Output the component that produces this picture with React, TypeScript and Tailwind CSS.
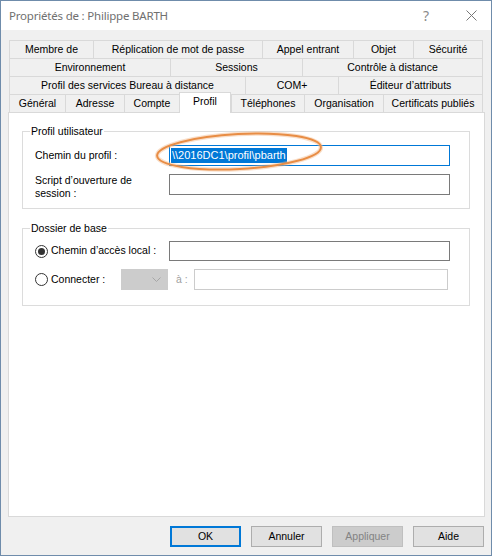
import React from "react";

type Tab = { label: string; w: number; active?: boolean };

const tabRows: Tab[][] = [
  [
    { label: "Membre de", w: 84 },
    { label: "Réplication de mot de passe", w: 169 },
    { label: "Appel entrant", w: 91 },
    { label: "Objet", w: 60 },
    { label: "Sécurité", w: 69 },
  ],
  [
    { label: "Environnement", w: 161 },
    { label: "Sessions", w: 132 },
    { label: "Contrôle à distance", w: 180 },
  ],
  [
    { label: "Profil des services Bureau à distance", w: 236 },
    { label: "COM+", w: 93 },
    { label: "Éditeur d’attributs", w: 144 },
  ],
  [
    { label: "Général", w: 56 },
    { label: "Adresse", w: 59 },
    { label: "Compte", w: 55 },
    { label: "Profil", w: 52, active: true },
    { label: "Téléphones", w: 73 },
    { label: "Organisation", w: 79 },
    { label: "Certificats publiés", w: 99 },
  ],
];

function Radio({ checked }: { checked?: boolean }) {
  return (
    <span className="flex h-[13px] w-[13px] shrink-0 items-center justify-center rounded-full border border-[#333333] bg-white">
      {checked && <span className="h-[7px] w-[7px] rounded-full bg-[#333333]" />}
    </span>
  );
}

function Button({
  label,
  primary,
  disabled,
}: {
  label: string;
  primary?: boolean;
  disabled?: boolean;
}) {
  const cls = primary
    ? "border-2 border-[#0078d7] bg-[#e1e1e1] text-black"
    : disabled
    ? "border border-[#bfbfbf] bg-[#cccccc] text-[#838383]"
    : "border border-[#adadad] bg-[#e1e1e1] text-black";
  return (
    <div className={`flex h-[21px] w-[71px] items-center justify-center ${cls}`}>
      {label}
    </div>
  );
}

export default function App() {
  return (
    <div
      className="flex h-[556px] w-[492px] flex-col border border-[#6f8cab] bg-[#f0f0f0] text-[10.5px] text-black"
      style={{ fontFamily: '"Liberation Sans", Arial, sans-serif' }}
    >
      {/* title bar */}
      <div className="flex h-[29px] shrink-0 items-center bg-white pl-[8px] pr-[14px]">
        <span
          className="text-[11.5px] tracking-[-0.2px] text-[#707070]"
          style={{ fontFamily: '"Noto Sans", sans-serif' }}
        >
          Propriétés de : Philippe BARTH
        </span>
        <span
          className="ml-auto mr-[37px] text-[14px] text-[#8a8a8a]"
          style={{ fontFamily: '"Noto Sans", sans-serif' }}
        >
          ?
        </span>
        <svg width="11" height="11" viewBox="0 0 11 11" className="text-[#777777]">
          <path d="M0.5 0.5 L10.5 10.5 M10.5 0.5 L0.5 10.5" stroke="currentColor" strokeWidth="1" />
        </svg>
      </div>

      <div className="flex flex-1 flex-col px-[7px] pt-[10px]">
        {/* tab strip */}
        <div className="mx-[1px] flex flex-col">
          {tabRows.map((row, i) => (
            <div key={i} className="flex h-[18px] border-r border-[#d9d9d9]">
              {row.map((t) =>
                t.active ? (
                  <div
                    key={t.label}
                    style={{ width: t.w }}
                    className="relative z-10 -mt-[2px] flex h-[21px] shrink-0 items-start justify-center border-l border-r border-t border-[#d9d9d9] bg-white pt-[1px]"
                  >
                    {t.label}
                  </div>
                ) : (
                  <div
                    key={t.label}
                    style={{ width: t.w }}
                    className="flex shrink-0 items-center justify-center border-l border-t border-[#d9d9d9]"
                  >
                    {t.label}
                  </div>
                )
              )}
            </div>
          ))}
        </div>

        {/* page */}
        <div className="relative h-[405px] w-[477px] border border-[#d9d9d9] bg-white px-[13px] pt-[12px]">
          <fieldset className="w-[448px] border border-[#dcdcdc] px-[12px] pb-[8px] pt-[7px]">
            <legend className="-ml-[5px] px-[1px] leading-[13px]">Profil utilisateur</legend>
            <div className="flex items-center">
              <span className="w-[134px]">Chemin du profil :</span>
              <div className="flex h-[21px] w-[281px] items-center border border-[#0078d7] bg-white px-[1px]">
                <span className="bg-[#0078d7] px-[1px] text-[11px] leading-[15px] text-white">
                  \\2016DC1\profil\pbarth
                </span>
              </div>
            </div>
            <div className="mt-[8px] flex items-start">
              <span className="w-[134px] leading-[13px]">
                Script d’ouverture de
                <br />
                session :
              </span>
              <div className="h-[21px] w-[281px] border border-[#7a7a7a] bg-white" />
            </div>
          </fieldset>

          <fieldset className="mt-[13px] w-[448px] border border-[#dcdcdc] px-[12px] pb-[15px] pt-[6px]">
            <legend className="-ml-[5px] px-[1px] leading-[13px]">Dossier de base</legend>
            <div className="flex items-center">
              <div className="flex w-[134px] items-center gap-[3px]">
                <Radio checked />
                <span>Chemin d’accès local :</span>
              </div>
              <div className="h-[20px] w-[281px] border border-[#7a7a7a] bg-white" />
            </div>
            <div className="mt-[8px] flex items-center">
              <div className="flex w-[86px] items-center gap-[3px]">
                <Radio />
                <span>Connecter :</span>
              </div>
              <div className="flex h-[21px] w-[47px] items-center justify-end border border-[#cccccc] bg-[#cccccc] pr-[6px]">
                <svg width="9" height="6" viewBox="0 0 9 6">
                  <path d="M0.5 0.5 L4.5 4.5 L8.5 0.5" fill="none" stroke="#a6a6a6" strokeWidth="1" />
                </svg>
              </div>
              <span className="ml-[8px] w-[18px] text-[#a0a0a0]">à :</span>
              <div className="h-[21px] w-[254px] border border-[#cccccc] bg-white" />
            </div>
          </fieldset>

          {/* hand-drawn highlight around the profile path */}
          <svg
            className="pointer-events-none absolute left-[142px] top-[15px]"
            width="178"
            height="47"
            viewBox="0 0 178 47"
          >
            <ellipse
              cx="88"
              cy="23.5"
              rx="82"
              ry="17.5"
              transform="rotate(-3 88 23.5)"
              fill="none"
              stroke="#f2b98a"
              strokeOpacity="0.45"
              strokeWidth="4.5"
            />
            <ellipse
              cx="88"
              cy="23.5"
              rx="82"
              ry="17.5"
              transform="rotate(-3 88 23.5)"
              fill="none"
              stroke="#e88d45"
              strokeWidth="2"
            />
          </svg>
        </div>

        {/* dialog buttons */}
        <div className="mt-[9px] flex justify-end gap-[10px]">
          <Button label="OK" primary />
          <Button label="Annuler" />
          <Button label="Appliquer" disabled />
          <Button label="Aide" />
        </div>
      </div>
    </div>
  );
}
